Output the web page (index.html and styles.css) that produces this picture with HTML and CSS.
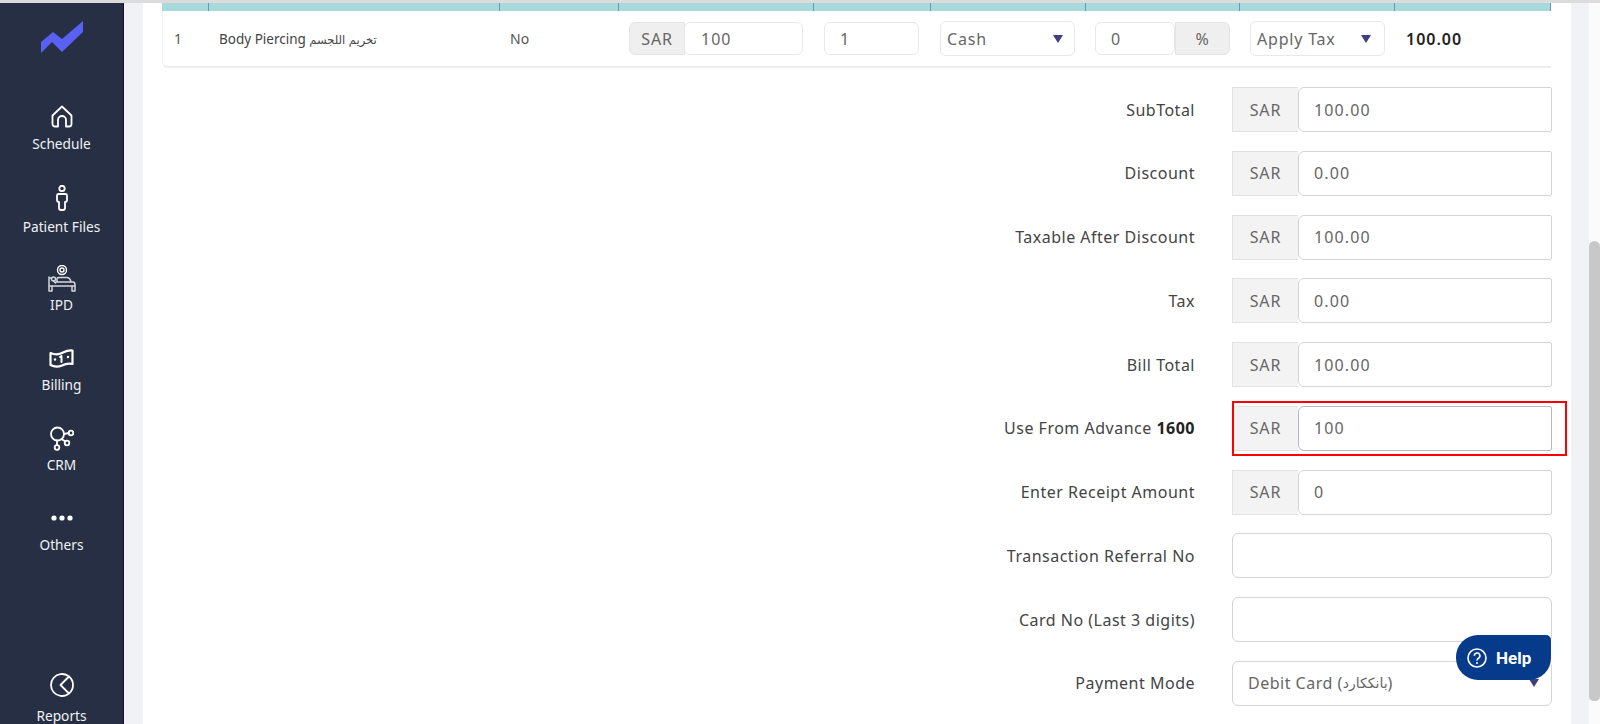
FILE: index.html
```html
<!DOCTYPE html>
<html lang="en">
<head>
<meta charset="utf-8">
<title>Billing</title>
<link rel="stylesheet" href="styles.css">
</head>
<body>
<div class="topline"></div>
<div class="app">
  <nav class="sidebar">
    <svg class="logo" viewBox="0 0 43 33"><polygon points="0,22 12,12 21,19 42,1 42,12 21,32 11,22 0,33"/></svg>
    <a class="nav nav-schedule">
      <svg width="22" height="23" viewBox="0 0 22 23"><path d="M1.500 10.500 L11 1.500 L20.500 10.500 V19 a2.500 2.500 0 0 1 -2.500 2.500 H15 V15 a4 4 0 0 0 -8 0 V21.500 H4 a2.500 2.500 0 0 1 -2.500 -2.500 Z"/></svg>
      <span>Schedule</span>
    </a>
    <a class="nav nav-patient">
      <svg width="12" height="26" viewBox="0 0 12 26"><circle cx="6" cy="3.500" r="2.700"/><path d="M2.500 9 H9.500 Q11 9 11 11 V15 Q11 17 9 17 V23 Q9 25 7 25 H5 Q3 25 3 23 V17 Q1 17 1 15 V11 Q1 9 2.500 9 Z"/></svg>
      <span>Patient Files</span>
    </a>
    <a class="nav nav-ipd">
      <svg width="28" height="27" viewBox="0 0 28 27"><circle cx="14" cy="5" r="4.500" stroke-width="1.400"/><circle cx="14" cy="5" r="2" stroke-width="1.400"/><path class="soft" d="M1 26 V12 M1 13 H3.500 M8 17 H25 Q27 17 27 20 V26 M1 21 H27 M9 17 V14 Q9 12.500 11 12.500 H19 Q22 12.500 23 17 M5.500 16 L7.500 18 M27 26 H24 V21 M1 26 H4 V21"/><circle class="soft" cx="5.500" cy="14" r="2"/></svg>
      <span>IPD</span>
    </a>
    <a class="nav nav-billing">
      <svg width="25" height="19" viewBox="0 0 25 19"><path d="M1.500 4 Q8 7 14 3.500 Q19 1 23.500 1.500 V15 Q18 14 13 16.500 Q7 19 1.500 16 Z" stroke-width="2.200"/><path d="M12.500 7 V13 M11 8 L12.500 7" stroke-width="2"/><circle class="dot" cx="6" cy="10.500" r="1.200"/><circle class="dot" cx="19" cy="8" r="1.200"/></svg>
      <span>Billing</span>
    </a>
    <a class="nav nav-crm">
      <svg width="24" height="25" viewBox="0 0 24 25"><circle cx="7.500" cy="8" r="6.500"/><circle cx="21" cy="7" r="2.300"/><circle cx="17" cy="17" r="2.300"/><circle cx="7" cy="21.500" r="2.300"/><path d="M14 8 L18.800 7 M11.500 13 L15.500 15.500 M7 14.500 V19"/></svg>
      <span>CRM</span>
    </a>
    <a class="nav nav-others">
      <svg width="22" height="8" viewBox="0 0 22 8"><circle class="dot" cx="3" cy="4" r="2.600"/><circle class="dot" cx="11" cy="4" r="2.600"/><circle class="dot" cx="19" cy="4" r="2.600"/></svg>
      <span>Others</span>
    </a>
    <a class="nav nav-reports">
      <svg width="24" height="24" viewBox="0 0 24 24"><path d="M18 2.800 A11 11 0 1 0 18 21.200"/><path d="M19 3.500 L10.500 12 L19 20.500 A11 11 0 0 0 19 3.500"/></svg>
      <span>Reports</span>
    </a>
  </nav>

  <main class="content">
    <div class="panel">
      <div class="table">
        <div class="thead">
          <div class="th"></div><div class="th"></div><div class="th"></div><div class="th"></div><div class="th"></div><div class="th"></div><div class="th"></div><div class="th"></div><div class="th"></div>
        </div>
        <div class="tr">
          <div class="td td-num">1</div>
          <div class="td td-name">Body Piercing <span class="ar">تخريم اللجسم</span></div>
          <div class="td">No</div>
          <div class="td"><div class="mini-group"><span class="mini-addon mini-addon-l">SAR</span><input class="mini-input mini-input-r" value="100"></div></div>
          <div class="td"><input class="mini-input mini-qty" value="1"></div>
          <div class="td td-tight"><div class="mini-select mini-cash">Cash<i class="arrow"></i></div></div>
          <div class="td td-tight"><div class="mini-group"><input class="mini-input mini-input-l" value="0"><span class="mini-addon mini-addon-r">%</span></div></div>
          <div class="td"><div class="mini-select mini-tax">Apply Tax<i class="arrow"></i></div></div>
          <div class="td td-total">100.00</div>
        </div>
      </div>

      <form class="form">
        <div class="row"><label>SubTotal</label><div class="field"><span class="addon">SAR</span><input class="input" value="100.00"></div></div>
        <div class="row"><label>Discount</label><div class="field"><span class="addon">SAR</span><input class="input" value="0.00"></div></div>
        <div class="row"><label>Taxable After Discount</label><div class="field"><span class="addon">SAR</span><input class="input" value="100.00"></div></div>
        <div class="row"><label>Tax</label><div class="field"><span class="addon">SAR</span><input class="input" value="0.00"></div></div>
        <div class="row"><label>Bill Total</label><div class="field"><span class="addon">SAR</span><input class="input" value="100.00"></div></div>
        <div class="row"><label>Use From Advance <b>1600</b></label><div class="field field-marked"><span class="addon">SAR</span><input class="input input-focus" value="100"><span class="marker"></span></div></div>
        <div class="row"><label>Enter Receipt Amount</label><div class="field"><span class="addon">SAR</span><input class="input" value="0"></div></div>
        <div class="row"><label>Transaction Referral No</label><div class="field"><input class="input input-solo"></div></div>
        <div class="row"><label>Card No (Last 3 digits)</label><div class="field"><input class="input input-solo"></div></div>
        <div class="row"><label>Payment Mode</label><div class="field"><div class="select">Debit Card (<span class="ar-lg">بانككارد</span>)<i class="arrow"></i></div></div></div>
      </form>
    </div>
  </main>

  <div class="track"><div class="thumb"></div></div>
</div>

<button class="help">
  <svg width="20" height="20" viewBox="0 0 20 20"><circle cx="10" cy="10" r="9"/><path d="M7.300 7.800 A2.800 2.800 0 1 1 11.500 10.200 Q10 11 10 12.500"/><circle class="qdot" cx="10" cy="15" r="1"/></svg>
  <span>Help</span>
</button>
</body>
</html>
```

FILE: styles.css
```css
* { box-sizing: border-box; }

html, body {
  margin: 0;
  height: 724px;
  overflow: hidden;
  background: #fff;
  font-family: "Noto Sans", sans-serif;
  color: #444;
}

.topline { height: 3px; background: #dcdcdc; }

.app { display: flex; height: 721px; }

/* Sidebar */
.sidebar {
  width: 124px;
  flex: none;
  background: #262f43;
  border-right: 1px solid #10162a;
  display: flex;
  flex-direction: column;
  align-items: center;
  padding-top: 17px;
  color: #f1f2f4;
  font-family: "Noto Sans", sans-serif;
  font-size: 13.700px;
  line-height: 18px;
}

.logo { width: 43px; height: 33px; margin-left: 2px; display: block; flex: none; }
.logo polygon { fill: #5a60f2; }

.nav { display: flex; flex-direction: column; align-items: center; flex: none; }
.nav svg { display: block; fill: none; stroke: #fff; stroke-width: 1.8; stroke-linejoin: round; stroke-linecap: round; }
.nav svg .dot { fill: #fff; stroke: none; }
.nav svg .soft { stroke: #d5d7dc; stroke-width: 1.500; }

.nav-schedule { margin-top: 52px; gap: 7px; }
.nav-patient  { margin-top: 32px; gap: 7px; }
.nav-ipd      { margin-top: 29px; gap: 4px; }
.nav-billing  { margin-top: 35px; gap: 8px; }
.nav-crm      { margin-top: 32px; gap: 5px; }
.nav-others   { margin-top: 40px; gap: 14px; }
.nav-reports  { margin-top: 119px; gap: 10px; }

/* Content */
.content {
  flex: none;
  width: 1465px;
  background: #f1f2f5;
  padding: 0 18px 0 19px;
}

.panel {
  background: #fff;
  height: 100%;
  padding: 0 19px;
}

.table { width: 1389px; }

.thead, .tr {
  display: grid;
  grid-template-columns: 47px 291px 119px 195px 117px 155px 154px 155px 156px;
}

.thead { height: 8px; background: #a8dadc; }
.th { border-right: 1px solid #5f9cb0; }

.tr {
  height: 57px;
  align-items: center;
  background: #fff;
  border-bottom: 2px solid #ececec;
  border-left: 1px solid #f3f3f3;
  border-radius: 0 0 0 6px;
}

.td { padding-left: 9px; font-size: 14px; color: #555; }
.td-num { padding-left: 11px; }
.td-tight { padding-left: 8px; }
.td-name { font-size: 13.500px; color: #444; }
.ar { font-family: "DejaVu Sans", sans-serif; font-size: 11.500px; }
.td-total { font-size: 16px; font-weight: 600; letter-spacing: 1px; color: #222; padding-left: 10px; }

.mini-group { display: flex; height: 33px; width: 174px; }
.td-tight .mini-group { width: 135px; }

.mini-input {
  font: inherit;
  font-size: 16px;
  letter-spacing: 1px;
  color: #666;
  height: 33px;
  border: 1px solid #e8e8e8;
  border-radius: 6px;
  padding: 0 16px;
  min-width: 0;
  background: #fff;
  outline: none;
}
.mini-input-r { flex: 1; margin-left: -1px; padding-left: 16px; }
.mini-input-l { width: 80px; padding-left: 15px; }
.mini-qty { width: 95px; padding-left: 15px; }

.mini-addon {
  font-size: 16px;
  letter-spacing: 0.800px;
  color: #666;
  background: #efefef;
  border: 1px solid #e4e4e4;
  display: flex;
  align-items: center;
  justify-content: center;
}
.mini-addon-l { width: 56px; border-radius: 6px 0 0 6px; }
.mini-addon-r { flex: 1; border-radius: 0 6px 6px 0; }

.mini-select {
  position: relative;
  height: 35px;
  font-size: 16px;
  letter-spacing: 0.800px;
  color: #666;
  border: 1px solid #e8e8e8;
  border-radius: 6px;
  padding: 0 6px;
  display: flex;
  align-items: center;
}
.mini-cash { width: 135px; }
.mini-tax { width: 135px; }

.arrow {
  position: absolute;
  width: 0;
  height: 0;
  border-left: 5px solid transparent;
  border-right: 5px solid transparent;
  border-top: 8px solid #3e3f80;
  top: 50%;
  margin-top: -4px;
  right: 11px;
}
.mini-tax .arrow { right: 13px; }

/* Form */
.form {
  display: flex;
  flex-direction: column;
  gap: 18.750px;
  padding-top: 19px;
  width: 1390px;
}

.row { display: flex; justify-content: flex-end; align-items: center; gap: 37px; height: 45px; flex: none; }
.row label { font-size: 16px; letter-spacing: 0.500px; color: #444; white-space: nowrap; }
.row label b { color: #222; font-weight: 700; }

.field { position: relative; display: flex; width: 320px; height: 45px; flex: none; }

.addon {
  width: 66px;
  flex: none;
  background: #f3f3f3;
  border: 1px solid #e2e2e2;
  border-right: 0;
  display: flex;
  align-items: center;
  justify-content: center;
  font-size: 16px;
  letter-spacing: 0.900px;
  color: #666;
}

.input {
  flex: 1;
  min-width: 0;
  font: inherit;
  font-size: 16px;
  letter-spacing: 1.100px;
  color: #666;
  background: #fff;
  border: 1px solid #d4d4d4;
  border-radius: 6px 2px 2px 6px;
  padding: 0 15px;
  outline: none;
}
.input-focus { border-color: #b9b9c6; }
.input-solo { border-radius: 6px; }

.marker {
  position: absolute;
  top: -5px;
  bottom: -5px;
  left: 0;
  right: -15px;
  border: 2px solid #f00;
  pointer-events: none;
}

.select {
  position: relative;
  flex: 1;
  font-size: 16px;
  letter-spacing: 0.500px;
  color: #666;
  border: 1px solid #d4d4d4;
  border-radius: 6px;
  padding: 0 15px;
  display: flex;
  align-items: center;
  white-space: pre;
}
.ar-lg { font-family: "DejaVu Sans", sans-serif; font-size: 14px; letter-spacing: 0; }
.select .arrow { right: 12px; }

/* Scrollbar */
.track {
  width: 11px;
  flex: none;
  background: #fbfbfb;
  padding-top: 238px;
}
.thumb {
  height: 460px;
  background: #c8c8c8;
  border-radius: 6px 6px 5px 5px;
}

/* Help button */
.help {
  position: fixed;
  left: 1456px;
  top: 635px;
  width: 95px;
  height: 45px;
  background: #063b8b;
  color: #fff;
  border: 0;
  border-radius: 22px 5px 22px 22px;
  display: flex;
  align-items: center;
  gap: 9px;
  padding: 0 0 0 11px;
  font-family: "Roboto", sans-serif;
  font-size: 17px;
  font-weight: 700;
}
.help svg { fill: none; stroke: #fff; stroke-width: 1.600; display: block; flex: none; }
.help .qdot { fill: #fff; stroke: none; }
```
